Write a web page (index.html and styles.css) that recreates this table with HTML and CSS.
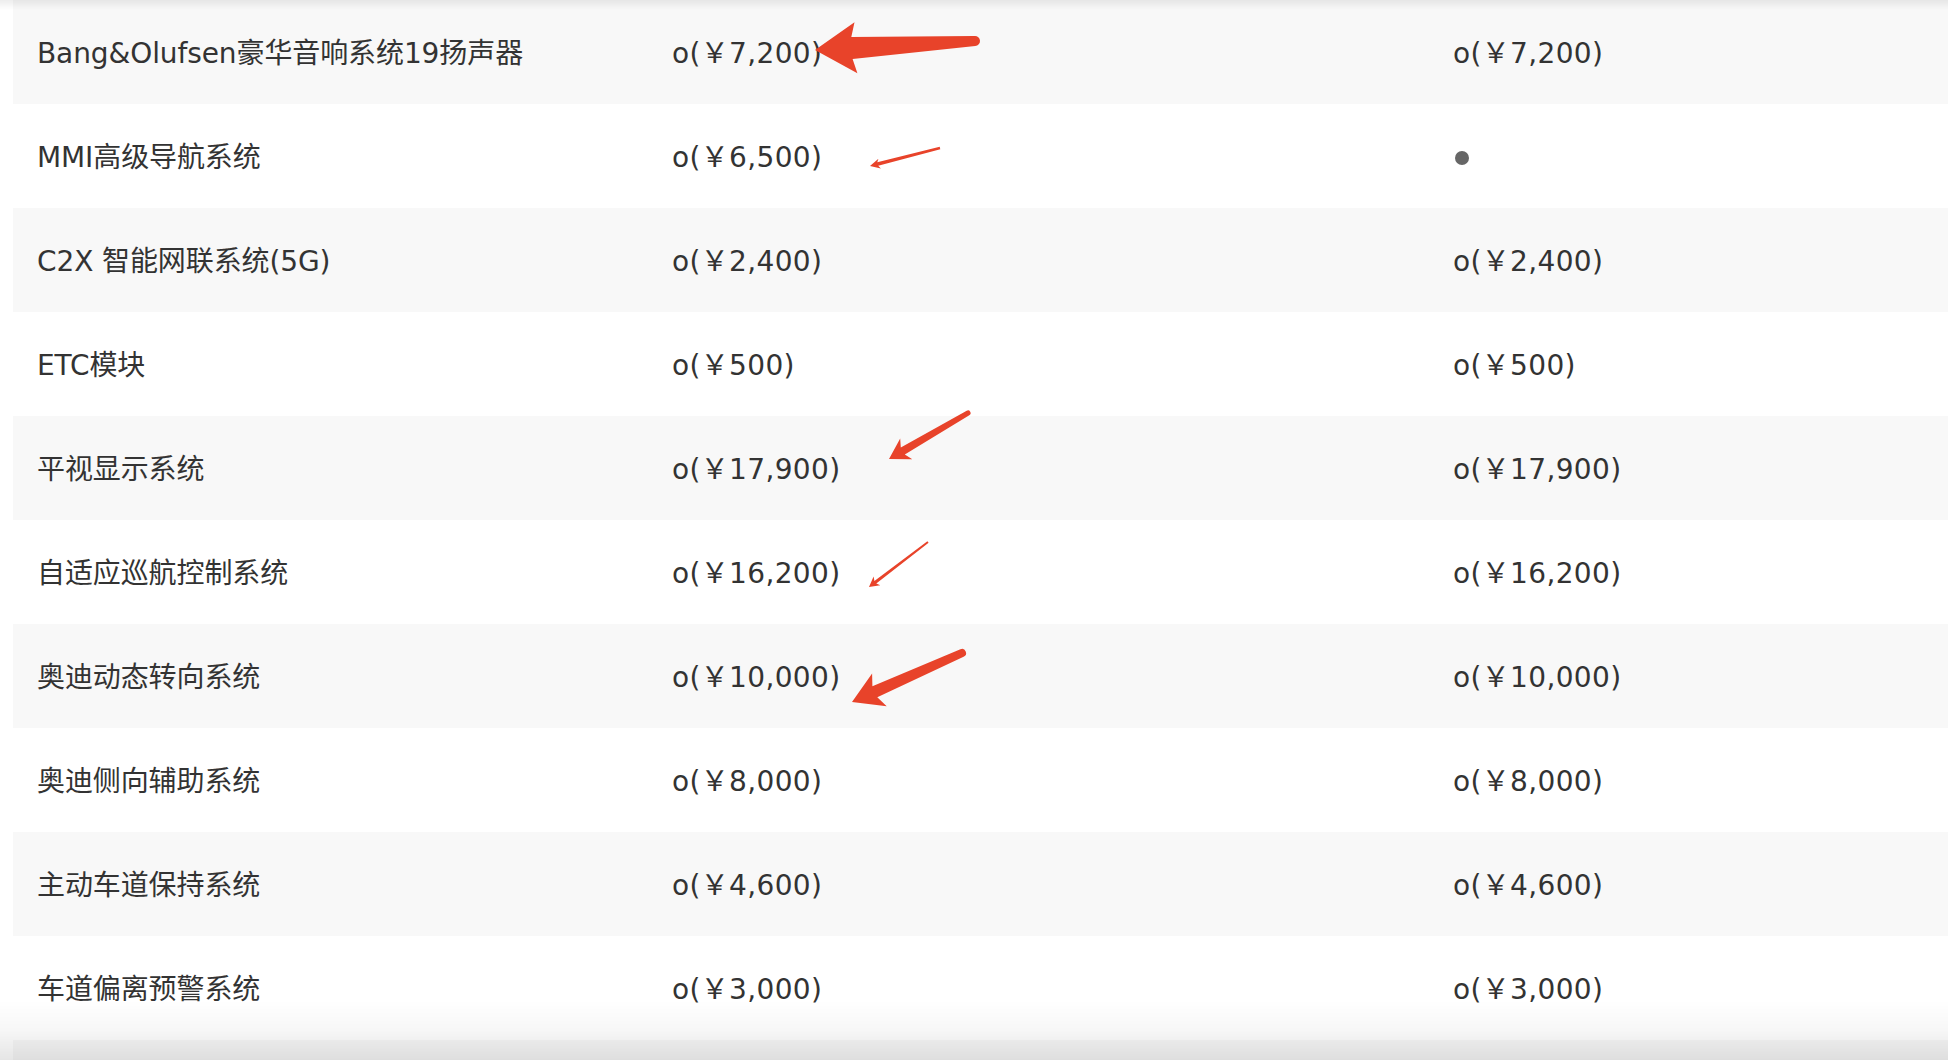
FILE: index.html
```html
<!DOCTYPE html>
<html>
<head>
    <meta charset="utf-8" />
    <meta name="viewport" content="width=device-width, initial-scale=1">
    <title>选装配置</title>
    <link rel="stylesheet" href="styles.css">
</head>
<body>
    <main class="options">
        <div class="row">
            <span class="name">Bang&amp;Olufsen豪华音响系统19扬声器</span>
            <span class="price">o(￥7,200)</span>
            <span class="price">o(￥7,200)</span>
        </div>
        <div class="row">
            <span class="name">MMI高级导航系统</span>
            <span class="price">o(￥6,500)</span>
            <span class="price"><i class="std"></i></span>
        </div>
        <div class="row">
            <span class="name">C2X 智能网联系统(5G)</span>
            <span class="price">o(￥2,400)</span>
            <span class="price">o(￥2,400)</span>
        </div>
        <div class="row">
            <span class="name">ETC模块</span>
            <span class="price">o(￥500)</span>
            <span class="price">o(￥500)</span>
        </div>
        <div class="row">
            <span class="name">平视显示系统</span>
            <span class="price">o(￥17,900)</span>
            <span class="price">o(￥17,900)</span>
        </div>
        <div class="row">
            <span class="name">自适应巡航控制系统</span>
            <span class="price">o(￥16,200)</span>
            <span class="price">o(￥16,200)</span>
        </div>
        <div class="row">
            <span class="name">奥迪动态转向系统</span>
            <span class="price">o(￥10,000)</span>
            <span class="price">o(￥10,000)</span>
        </div>
        <div class="row">
            <span class="name">奥迪侧向辅助系统</span>
            <span class="price">o(￥8,000)</span>
            <span class="price">o(￥8,000)</span>
        </div>
        <div class="row">
            <span class="name">主动车道保持系统</span>
            <span class="price">o(￥4,600)</span>
            <span class="price">o(￥4,600)</span>
        </div>
        <div class="row">
            <span class="name">车道偏离预警系统</span>
            <span class="price">o(￥3,000)</span>
            <span class="price">o(￥3,000)</span>
        </div>
        <div class="row"></div>

        <!-- 标注箭头 -->
        <svg class="marks" width="1948" height="1060" viewBox="0 0 1948 1060">
            <path d="M815,50 L857.4,73.2 L852.6,58.9 L975.3,46 A5,5 0 0 0 974.7,36 L851.3,36.9 L854.5,22.2 Z" />
            <path d="M870,166 L880.9,168.4 L878.2,165.8 L940.3,149.3 L939.7,146.7 L877.3,162.3 L878.4,158.7 Z" />
            <path d="M889,459 L912.3,459.3 L904.8,454.4 L969.3,415.2 A2.5,2.5 0 0 0 966.7,410.8 L900.8,447.5 L900.2,438.6 Z" />
            <path d="M869,587 L880.3,585.3 L876.3,583.4 L928.6,542.8 L927.4,541.2 L874.4,580.9 L873.6,576.6 Z" />
            <path d="M852,702 L886.7,706.2 L877.3,697.3 L963.6,656.7 A4,4 0 0 0 960.4,649.3 L872.4,686.3 L872.1,673.4 Z" />
        </svg>
    </main>
</body>
</html>
```

FILE: styles.css
```css
* {padding: 0;margin: 0;box-sizing: border-box;}
html, body {height: 100%;overflow: hidden;}
body {
    background: #fff;
    color: #333;
    font-family: "DejaVu Sans", "Noto Sans CJK SC", sans-serif;
    font-size: 28px;
}
/* 窗口上下边缘的阴影 */
body::before, body::after {content: '';position: fixed;left: 0;right: 0;pointer-events: none;z-index: 2;}
body::before {top: 0;height: 10px;background: linear-gradient(rgba(0,0,0,.07), rgba(0,0,0,0));}
body::after {bottom: 0;height: 60px;background: linear-gradient(rgba(0,0,0,0), rgba(0,0,0,.03) 50%, rgba(0,0,0,.1));}

.options {position: relative;padding-left: 13px;}
.row {
    display: grid;
    grid-template-columns: 635px 781px 1fr;
    align-items: center;
    height: 104px;
    padding: 3px 0 0 24px;
    line-height: 32px;
    white-space: nowrap;
}
.row:nth-child(odd) {background: #f8f8f8;}
.name {letter-spacing: -0.1px;}
.price {display: flex;align-items: center;letter-spacing: 0.35px;}
.std {display: inline-block;width: 14px;height: 14px;margin-left: 2px;border-radius: 50%;background: #666;}

.marks {position: absolute;top: 0;left: 0;pointer-events: none;z-index: 1;}
.marks path {fill: #e8432a;}
```
